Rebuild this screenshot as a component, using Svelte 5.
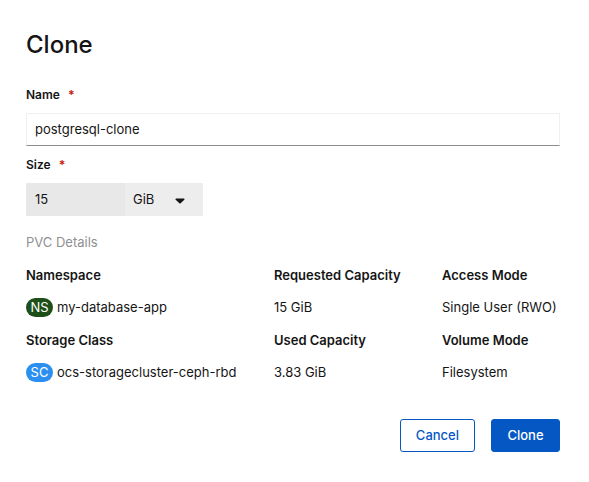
<script>
  let name = $state('postgresql-clone');
  let unit = $state('GiB');

  const details = [
    { term: 'Namespace', value: 'my-database-app', badge: 'NS', kind: 'namespace' },
    { term: 'Requested Capacity', value: '15 GiB' },
    { term: 'Access Mode', value: 'Single User (RWO)' },
    { term: 'Storage Class', value: 'ocs-storagecluster-ceph-rbd', badge: 'SC', kind: 'storage' },
    { term: 'Used Capacity', value: '3.83 GiB' },
    { term: 'Volume Mode', value: 'Filesystem' }
  ];
</script>

<main>
  <h1>Clone</h1>

  <form onsubmit={(event) => event.preventDefault()}>
    <div class="field">
      <label for="clone-name">Name <span class="required" aria-hidden="true">*</span></label>
      <input id="clone-name" class="name" type="text" bind:value={name} required />
    </div>

    <div class="field">
      <label for="clone-size">Size <span class="required" aria-hidden="true">*</span></label>
      <div class="size">
        <input id="clone-size" class="amount" type="text" value="15" readonly />
        <div class="unit">
          <select aria-label="Size unit" bind:value={unit}>
            <option>MiB</option>
            <option>GiB</option>
            <option>TiB</option>
          </select>
          <svg viewBox="0 0 10 6" width="10" height="6" aria-hidden="true">
            <path d="M1.2 0.5h7.6c.7 0 1 .8.5 1.3L5.6 5.3a.9.9 0 0 1-1.2 0L.7 1.8C.2 1.3.5.5 1.2.5z" fill="#151515" />
          </svg>
        </div>
      </div>
    </div>

    <h2>PVC Details</h2>
    <dl>
      {#each details as item}
        <div class="detail">
          <dt>{item.term}</dt>
          <dd>
            {#if item.badge}<span class="badge {item.kind}">{item.badge}</span>{/if}
            <span>{item.value}</span>
          </dd>
        </div>
      {/each}
    </dl>

    <footer>
      <button type="button" class="secondary">Cancel</button>
      <button type="submit" class="primary">Clone</button>
    </footer>
  </form>
</main>

<style>
  :global(body) {
    margin: 0;
    background: #fff;
  }

  main {
    box-sizing: border-box;
    padding: 29px 29px 30px 26px;
    font-family: Inter, "Open Sans", sans-serif;
    font-size: 13px;
    line-height: 21px;
    color: #151515;
  }

  h1 {
    margin: 0 0 23px;
    font-size: 24px;
    font-weight: 500;
    line-height: 32px;
  }

  .field {
    display: flex;
    flex-direction: column;
    gap: 8px;
    margin-bottom: 8px;
  }

  label {
    font-size: 12px;
    font-weight: 600;
  }

  .required {
    margin-left: 5px;
    font-weight: 700;
    color: #c9190b;
  }

  input,
  select,
  button {
    box-sizing: border-box;
    height: 33px;
    margin: 0;
    border: 0;
    border-radius: 0;
    font: inherit;
    color: inherit;
  }

  .name {
    width: 100%;
    padding: 0 8px 2px;
    border: 1px solid #f0f0f0;
    border-bottom-color: #8a8d90;
    background: #fff;
  }

  .size {
    display: flex;
  }

  .amount {
    width: 99px;
    padding: 0 9px 2px;
    background: #e8e8e8;
  }

  .unit {
    position: relative;
    width: 78px;
  }

  select {
    width: 100%;
    padding: 0 8px;
    appearance: none;
    background: #ededed;
  }

  .unit svg {
    position: absolute;
    top: 15px;
    right: 18px;
    pointer-events: none;
  }

  h2 {
    margin: 16px 0 12px;
    font-size: 13px;
    font-weight: 400;
    line-height: 21px;
    color: #8f8f8f;
  }

  dl {
    display: grid;
    grid-template-columns: 248fr 168fr 118fr;
    row-gap: 12px;
    margin: 0 0 36px;
    white-space: nowrap;
  }

  .detail {
    display: flex;
    flex-direction: column;
    gap: 11px;
    min-width: 0;
  }

  dt {
    font-weight: 600;
  }

  dd {
    display: flex;
    align-items: center;
    gap: 4px;
    margin: 0;
  }

  .badge {
    width: 27px;
    border-radius: 10px;
    line-height: 19px;
    text-align: center;
    color: #fff;
  }

  .namespace {
    background: #1e4f18;
  }

  .storage {
    background: #2b8ff0;
  }

  footer {
    display: flex;
    justify-content: flex-end;
    gap: 16px;
  }

  button {
    padding: 0 15px;
    border: 1px solid #0558c4;
    border-radius: 3px;
    font-weight: 500;
  }

  .secondary {
    min-width: 75px;
    background: #fff;
    color: #0558c4;
  }

  .primary {
    min-width: 69px;
    background: #0558c4;
    color: #fff;
  }
</style>
